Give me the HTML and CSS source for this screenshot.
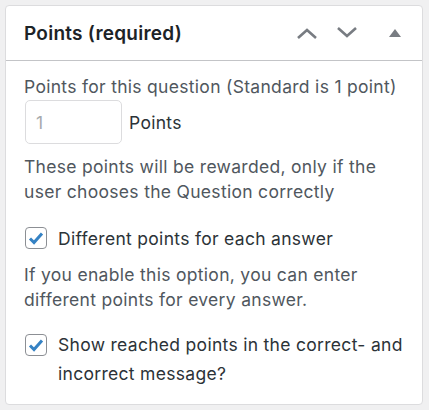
FILE: index.html
```html
<!DOCTYPE html>
<html>
<head>
<meta charset="utf-8">
<link rel="stylesheet" href="styles.css">
</head>
<body>
<div class="card">
  <div class="card-header">
    <h2 class="title">Points (required)</h2>
    <div class="actions">
      <svg class="icon" width="22" height="14" viewBox="0 0 22 14"><path d="M2 12 L11 4 L20 12" fill="none" stroke="#787c82" stroke-width="2.6"/></svg>
      <svg class="icon" width="22" height="14" viewBox="0 0 22 14"><path d="M2 2 L11 10 L20 2" fill="none" stroke="#787c82" stroke-width="2.6"/></svg>
      <svg class="icon tri" width="14" height="10" viewBox="0 0 14 10"><path d="M7 1 L13 9 L1 9 Z" fill="#787c82"/></svg>
    </div>
  </div>
  <div class="card-body">
    <p class="text">Points for this question (Standard is 1 point)</p>
    <div class="points-row">
      <input class="points-input" type="text" placeholder="1">
      <span class="label">Points</span>
    </div>
    <p class="text desc">These points will be rewarded, only if the user chooses the Question correctly</p>
    <label class="check-row">
      <span class="box"><svg width="16" height="14" viewBox="0 0 16 14"><path d="M2 7.5 L6 11.5 L14 2.5" fill="none" stroke="#3582c4" stroke-width="3"/></svg></span>
      <span class="label">Different points for each answer</span>
    </label>
    <p class="text desc2">If you enable this option, you can enter different points for every answer.</p>
    <label class="check-row last">
      <span class="box"><svg width="16" height="14" viewBox="0 0 16 14"><path d="M2 7.5 L6 11.5 L14 2.5" fill="none" stroke="#3582c4" stroke-width="3"/></svg></span>
      <span class="label">Show reached points in the correct- and incorrect message?</span>
    </label>
  </div>
</div>
</body>
</html>
```
FILE: styles.css
```css
html, body {
  margin: 0;
  padding: 0;
  background: #f0f0f1;
}
body {
  padding: 5px 6px 5px 5px;
  font-family: Inter, "Liberation Sans", sans-serif;
}
.card {
  background: #fff;
  border: 1px solid #dcdcde;
  border-radius: 4px;
  box-sizing: border-box;
  height: 400px;
}
.card-header {
  height: 55px;
  box-sizing: border-box;
  border-bottom: 1px solid #c3c4c7;
  display: flex;
  align-items: center;
  padding: 0 19px 0 18px;
}
.title {
  margin: 0;
  font-size: 19px;
  letter-spacing: 0.25px;
  font-weight: 600;
  color: #1d2327;
  flex: 1;
}
.actions {
  display: flex;
  align-items: center;
  gap: 18px;
}
.icon { display: block; }
.tri { margin-left: 12px; margin-right: 1px; }
.card-body {
  padding: 13px 10px 0 18px;
}
.text {
  margin: 0;
  font-size: 17.5px;
  letter-spacing: 0.3px;
  line-height: 25px;
  color: #50575e;
}
.points-row {
  display: flex;
  align-items: center;
  gap: 7px;
  margin-top: 1px;
}
.points-input {
  width: 97px;
  height: 44px;
  box-sizing: border-box;
  border: 1px solid #dcdcde;
  border-radius: 5px;
  padding: 0 10px;
  font-family: inherit;
  font-size: 17.5px;
  color: #2c3338;
  margin: 0 0 0 1px;
}
.points-input::placeholder { color: #a7aaad; }
.label {
  font-size: 17.5px;
  letter-spacing: 0.3px;
  line-height: 25px;
  color: #2c3338;
}
.desc { margin-top: 10px; }
.check-row {
  display: flex;
  align-items: flex-start;
  gap: 11px;
  margin-top: 22px;
}
.box {
  flex: none;
  width: 22px;
  height: 22px;
  box-sizing: border-box;
  border: 1px solid #8c8f94;
  border-radius: 4px;
  margin: 1px 0 0 1px;
  display: flex;
  align-items: center;
  justify-content: center;
}
.desc2 { margin-top: 11px; }
.check-row.last { margin-top: 21px; }
.check-row.last .label { line-height: 29px; margin-top: -3px; }
```
